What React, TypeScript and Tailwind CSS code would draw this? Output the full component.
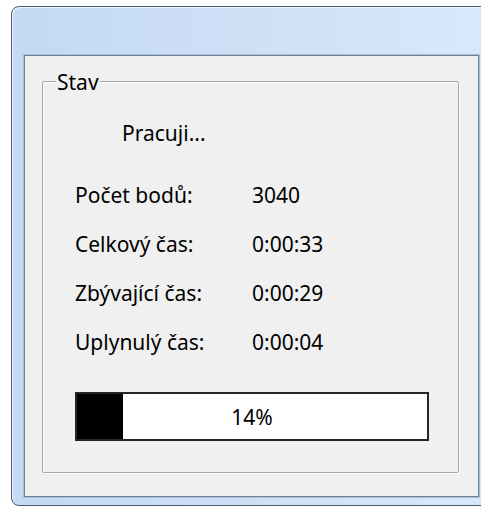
import React from "react";

type Row = { label: string; value: string };

const rows: Row[] = [
  { label: "Počet bodů:", value: "3040" },
  { label: "Celkový čas:", value: "0:00:33" },
  { label: "Zbývající čas:", value: "0:00:29" },
  { label: "Uplynulý čas:", value: "0:00:04" },
];

const progress = 14;
// usable track width of the bar's chunk area
const track = 330;

export default function App() {
  return (
    <div
      className="w-[481px] h-[506px] bg-white overflow-hidden text-black"
      style={{ fontFamily: '"Noto Sans", "Open Sans", sans-serif' }}
    >
      {/* window frame */}
      <div className="ml-[11px] mt-[6px] w-[482px] h-[500px] rounded-tl-[8px] rounded-bl-[8px] border border-[#4b5a6b] bg-gradient-to-r from-[#c4d9f2] via-[#cde0f6] to-[#d8e9fb] shadow-[inset_1px_1px_0_#eef5fd] pl-[12px] pt-[48px] pr-[2px] pb-[8px]">
        {/* client area */}
        <div className="w-[455px] h-[442px] border border-[#6f8197] shadow-[0_0_0_1px_#a9bfd8] bg-[#f0f0f0] pl-[17px] pt-[25px]">
          {/* group box */}
          <div className="relative w-[417px] h-[392px] border border-[#a6a6a6] rounded-[2px] shadow-[inset_1px_1px_0_#ffffff,1px_1px_0_#ffffff]">
            <span className="absolute left-[13px] top-[-12px] bg-[#f0f0f0] px-[1px] text-[21px] leading-[24px]">
              Stav
            </span>
            <div className="pl-[32px] pt-[37px] flex flex-col text-[21px] leading-[28px]">
              <div className="pl-[47px]">Pracuji...</div>
              <div className="mt-[34px] flex flex-col gap-[21px]">
                {rows.map((r) => (
                  <div key={r.label} className="flex">
                    <span className="w-[177px]">{r.label}</span>
                    <span>{r.value}</span>
                  </div>
                ))}
              </div>
              {/* progress bar */}
              <div className="mt-[36px] w-[354px] h-[49px] border-2 border-[#262626] bg-white relative flex items-center justify-center">
                <div
                  className="absolute left-0 top-0 bottom-0 bg-black"
                  style={{ width: `${Math.round((progress / 100) * track)}px` }}
                />
                <span className="relative">{progress}%</span>
              </div>
            </div>
          </div>
        </div>
      </div>
    </div>
  );
}
